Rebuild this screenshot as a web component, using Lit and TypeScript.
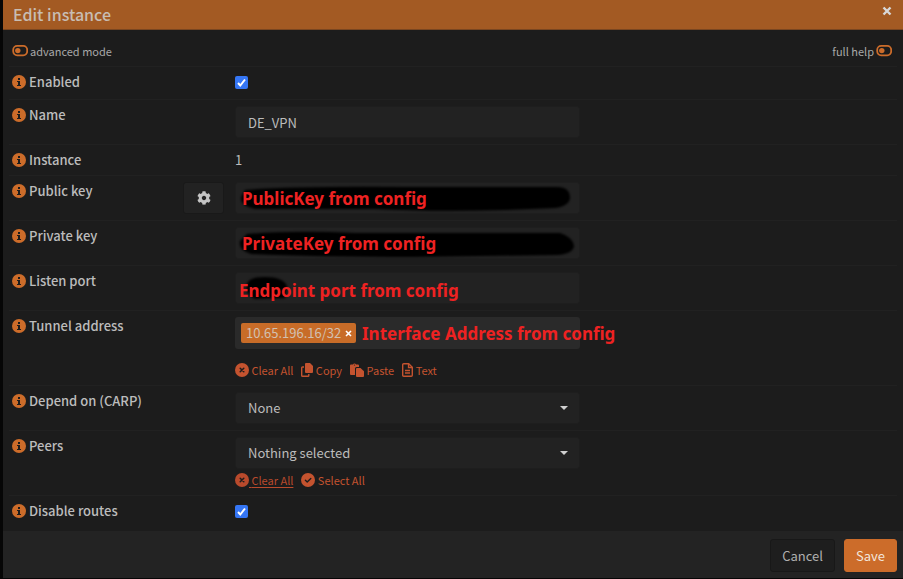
import { LitElement, html, css, svg, nothing, TemplateResult } from "lit";
import { customElement } from "lit/decorators.js";

const infoIcon = html`<svg class="dot" viewBox="0 0 14 14" aria-hidden="true">
  <circle cx="7" cy="7" r="7" fill="currentColor" />
  <path d="M6 3h2v2H6zM5 6h3v4h1v1H5v-1h1V7H5z" fill="#1c1c1c" />
</svg>`;

const crossDot = html`<svg class="dot" viewBox="0 0 14 14" aria-hidden="true">
  <circle cx="7" cy="7" r="7" fill="currentColor" />
  <path d="M5.2 5.2l3.6 3.6M8.8 5.2L5.2 8.8" stroke="#1c1c1c" stroke-width="1.5" stroke-linecap="round" />
</svg>`;

const checkDot = html`<svg class="dot" viewBox="0 0 14 14" aria-hidden="true">
  <circle cx="7" cy="7" r="7" fill="currentColor" />
  <path d="M4.4 7.2l1.8 1.8 3.6-3.6" fill="none" stroke="#1c1c1c" stroke-width="1.4" stroke-linecap="round" stroke-linejoin="round" />
</svg>`;

const copyIcon = html`<svg class="glyph" viewBox="0 0 12 14" aria-hidden="true">
  <path d="M5 0h4l3 3v6a1 1 0 0 1-1 1H5a1 1 0 0 1-1-1V1a1 1 0 0 1 1-1z" fill="currentColor" />
  <path d="M3 4H1.5a.8.8 0 0 0-.8.8v7.7c0 .5.3.8.8.8H7a.8.8 0 0 0 .8-.8V11" fill="none" stroke="currentColor" stroke-width="1.4" />
</svg>`;

const pasteIcon = html`<svg class="glyph wide" viewBox="0 0 14 14" aria-hidden="true">
  <path d="M1 1.5h2a1.6 1.6 0 0 1 3 0h2a1 1 0 0 1 1 1V4H6.5A1.5 1.5 0 0 0 5 5.5V12H1a1 1 0 0 1-1-1V2.5a1 1 0 0 1 1-1z" fill="currentColor" />
  <path d="M7 5h3.5L14 8.3V13a1 1 0 0 1-1 1H7a1 1 0 0 1-1-1V6a1 1 0 0 1 1-1z" fill="currentColor" />
  <circle cx="4.5" cy="2" r=".6" fill="#1c1c1c" />
</svg>`;

const textIcon = html`<svg class="glyph narrow" viewBox="0 0 11 14" aria-hidden="true">
  <path d="M1.7.7h5L10.3 4.3v8c0 .6-.4 1-1 1H1.7c-.6 0-1-.4-1-1V1.7c0-.6.4-1 1-1z" fill="none" stroke="currentColor" stroke-width="1.4" />
  <path d="M6.5.7v3.8h3.8M3 7.5h5M3 10h5" fill="none" stroke="currentColor" stroke-width="1.3" />
</svg>`;

const toggleIcon = html`<svg class="toggle" viewBox="0 0 16 12" aria-hidden="true">
  <rect x="1.2" y=".9" width="14" height="9.4" rx="4" fill="none" stroke="currentColor" stroke-width="1.8" />
  <circle cx="5.8" cy="5.6" r="2.7" fill="currentColor" />
</svg>`;

const gearIcon = html`<svg class="gear" viewBox="0 0 512 512" aria-hidden="true">
  <path fill="currentColor" d="M487.4 315.7l-42.6-24.6c4.3-23.2 4.3-47 0-70.2l42.6-24.6c4.9-2.8 7.1-8.6 5.5-14-11.1-35.6-30-67.8-54.7-94.6-3.8-4.1-10-5.1-14.8-2.3L380.8 110c-17.9-15.4-38.5-27.3-60.8-35.1V25.8c0-5.6-3.9-10.5-9.4-11.7-36.7-8.2-74.3-7.8-109.2 0-5.5 1.2-9.4 6.1-9.4 11.7V75c-22.2 7.9-42.8 19.8-60.8 35.1L88.7 85.5c-4.9-2.8-11-1.9-14.8 2.3-24.7 26.7-43.6 58.9-54.7 94.6-1.7 5.4.6 11.2 5.5 14L67.3 221c-4.3 23.2-4.3 47 0 70.2l-42.6 24.6c-4.9 2.8-7.1 8.6-5.5 14 11.1 35.6 30 67.8 54.7 94.6 3.8 4.1 10 5.1 14.8 2.3l42.6-24.6c17.9 15.4 38.5 27.3 60.8 35.1v49.2c0 5.6 3.9 10.5 9.4 11.7 36.7 8.2 74.3 7.8 109.2 0 5.5-1.2 9.4-6.1 9.4-11.7v-49.2c22.2-7.9 42.8-19.8 60.8-35.1l42.6 24.6c4.9 2.8 11 1.9 14.8-2.3 24.7-26.7 43.6-58.9 54.7-94.6 1.5-5.5-.7-11.3-5.6-14.1zM256 336c-44.1 0-80-35.9-80-80s35.9-80 80-80 80 35.9 80 80-35.9 80-80 80z" />
</svg>`;

const redactions: Record<string, TemplateResult> = {
  pub: svg`<path d="M10 8Q60 4 170 5L322 5Q335 5 335 16Q334 24 320 26L270 28Q200 30 140 27L20 27Q5 24 6 15Z" />`,
  priv: svg`<path d="M12 7Q60 3 120 6L325 6Q338 10 339 19Q338 27 322 28L180 30Q80 30 16 27Q3 23 5 14Z" />`,
  port: svg`<path d="M12 12Q14 5 30 5Q48 5 52 14L50 26L20 27Q10 22 12 12Z" />`,
};

@customElement("app-root")
export class AppRoot extends LitElement {
  static styles = css`
    :host {
      display: block;
      min-height: 100vh;
      box-sizing: border-box;
      padding: 0 0 2px 3px;
      background: #060606;
      color: #bcbcbc;
      font: 13px/16px "Noto Sans CJK SC", "Noto Sans", sans-serif;
    }
    * { box-sizing: border-box; }
    button, input, select { font: inherit; color: inherit; margin: 0; }
    button { padding: 0; border: 0; background: none; cursor: pointer; }
    svg { display: block; flex: none; }
    .dialog { background: #1c1c1c; }
    .header {
      display: flex;
      justify-content: space-between;
      height: 30px;
      padding: 0 10px;
      background: #a35a23;
      border-bottom: 1px solid #7a4620;
    }
    .title { margin: 0; font-size: 16px; line-height: 28px; font-weight: 500; color: #c8bdb3; }
    .close { width: 12px; height: 22px; color: #d8d8d8; }
    .close svg { width: 12px; height: 12px; }
    .toolbar {
      display: flex;
      justify-content: space-between;
      height: 36px;
      padding: 6px 11px 0 9px;
      font-size: 11px;
      color: #a9a9a9;
    }
    .switch { display: flex; align-items: center; gap: 2px; }
    .toggle { width: 16px; height: 12px; color: #cc6c2a; }
    .rows { padding: 0 6px 3px 6px; }
    .row {
      display: grid;
      grid-template-columns: 223fr 345fr 309fr;
      padding: 6px 8px 6px 3px;
      border-top: 1px solid #212121;
    }
    .name { display: flex; justify-content: space-between; align-items: flex-start; }
    .caption { display: flex; align-items: center; gap: 3px; padding-top: 1px; font-weight: 500; }
    .info { color: #cc6c2a; }
    .dot { width: 14px; height: 14px; }
    .generate {
      display: grid;
      place-items: center;
      width: 41px;
      height: 32px;
      margin-right: 11px;
      background: #222222;
      border: 1px solid #191919;
      border-radius: 3px;
      color: #c4c4c4;
    }
    .gear { width: 14px; height: 14px; }
    .field { position: relative; height: 32px; }
    .input, .select {
      display: block;
      width: 100%;
      height: 32px;
      padding: 0 12px;
      background: #222222;
      border: 1px solid #1e1e1e;
      border-radius: 3px;
      outline: none;
    }
    .select { appearance: none; }
    .caret {
      position: absolute;
      right: 12px;
      top: 14px;
      border: 4px solid transparent;
      border-top-color: #d0d0d0;
      border-bottom: 0;
      pointer-events: none;
    }
    .redaction { position: absolute; inset: 0; width: 345px; height: 32px; filter: blur(1px); pointer-events: none; }
    .note {
      position: absolute;
      top: 5px;
      left: 7px;
      font: 700 17px/24px "Noto Sans", sans-serif;
      color: #ee2222;
      white-space: nowrap;
      pointer-events: none;
    }
    .note.low { top: 7px; left: 4px; }
    .note.after { left: 127px; }
    .tokens { display: flex; align-items: center; padding: 0 6px; height: 32px; background: #2a2a2a; border-radius: 3px; }
    .token {
      display: flex;
      align-items: center;
      gap: 4px;
      height: 20px;
      padding: 0 4px 0 5px;
      background: #c86c28;
      border-radius: 2px;
      color: #d2c0b0;
    }
    .remove { color: #ffffff; }
    .remove svg { width: 7px; height: 7px; }
    .token-input { flex: 1; min-width: 0; border: 0; background: none; outline: none; }
    .links { display: flex; align-items: flex-start; gap: 8px; height: 17px; margin-top: 3px; font-size: 11px; }
    .links.spaced { margin-top: 13px; }
    .link { display: flex; align-items: center; color: #c4532f; text-decoration: none; }
    .link.active { text-decoration: underline; text-underline-offset: 2px; color: #b94a2c; }
    .glyph { width: 12px; height: 14px; }
    .glyph.wide { width: 14px; }
    .glyph.narrow { width: 11px; }
    .tick { position: relative; display: block; width: 13px; height: 13px; margin: 3px 0 4px; }
    .tick-input { appearance: none; display: block; width: 13px; height: 13px; border-radius: 2px; }
    .tick-input:checked { background: #3576f5; }
    .tick svg { position: absolute; inset: 0; width: 13px; height: 13px; pointer-events: none; }
    .static { display: block; padding-top: 1px; height: 18px; }
    .footer {
      display: flex;
      justify-content: flex-end;
      gap: 9px;
      padding: 8px 6px 6px;
      background: #232323;
    }
    .button { height: 33px; padding: 0 11px; border: 1px solid #181818; border-radius: 3px; background: #1e1e1e; color: #b0b0b0; }
    .button.primary { background: #cc6c2a; border-color: #cc6c2a; color: #f2e6dc; }
  `;

  private caption(id: string, text: string) {
    return html`<span class="caption">
      <button type="button" class="info" aria-label="Help: ${text}">${infoIcon}</button>
      <label for=${id}>${text}</label>
    </span>`;
  }

  private row(id: string, text: string, control: unknown, extra: unknown = nothing) {
    return html`<div class="row">
      <div class="name">${this.caption(id, text)}${extra}</div>
      <div>${control}</div>
    </div>`;
  }

  private tick(id: string) {
    return html`<span class="tick">
      <input class="tick-input" type="checkbox" id=${id} checked />
      <svg viewBox="0 0 13 13" aria-hidden="true">
        <path d="M3 7l2.3 2.5L10 3.5" fill="none" stroke="#fff" stroke-width="2" />
      </svg>
    </span>`;
  }

  private redacted(id: string, note: string, low = false) {
    return html`<div class="field">
      <input class="input" id=${id} type="text" autocomplete="off" />
      <svg class="redaction" viewBox="0 0 345 32" aria-hidden="true">${redactions[id]}</svg>
      <span class="note ${low ? "low" : ""}">${note}</span>
    </div>`;
  }

  private select(id: string, value: string) {
    return html`<div class="field">
      <select class="select" id=${id}><option>${value}</option></select>
      <span class="caret"></span>
    </div>`;
  }

  private link(icon: TemplateResult, text: string, active = false) {
    return html`<a class="link ${active ? "active" : ""}" href="#">${icon}<span>&nbsp;${text}</span></a>`;
  }

  render() {
    return html`<section class="dialog" role="dialog" aria-labelledby="title">
      <header class="header">
        <h1 class="title" id="title">Edit instance</h1>
        <button type="button" class="close" aria-label="Close">
          <svg viewBox="0 0 12 12"><path d="M2.5 2.5l7 7M9.5 2.5l-7 7" stroke="currentColor" stroke-width="2.4" /></svg>
        </button>
      </header>
      <form>
        <div class="toolbar">
          <button type="button" class="switch">${toggleIcon}<span>advanced mode</span></button>
          <button type="button" class="switch"><span>full help</span>${toggleIcon}</button>
        </div>
        <div class="rows">
          ${this.row("enabled", "Enabled", this.tick("enabled"))}
          ${this.row("name", "Name", html`<input class="input" id="name" type="text" value="DE_VPN" />`)}
          ${this.row("instance", "Instance", html`<output class="static" id="instance">1</output>`)}
          ${this.row(
            "pub",
            "Public key",
            this.redacted("pub", "PublicKey from config"),
            html`<button type="button" class="generate" aria-label="Generate new keypair">${gearIcon}</button>`,
          )}
          ${this.row("priv", "Private key", this.redacted("priv", "PrivateKey from config"))}
          ${this.row("port", "Listen port", this.redacted("port", "Endpoint port from config", true))}
          ${this.row(
            "tunnel",
            "Tunnel address",
            html`<div class="field">
                <div class="tokens">
                  <span class="token">10.65.196.16/32
                    <button type="button" class="remove" aria-label="Remove">
                      <svg viewBox="0 0 7 7"><path d="M1 1l5 5M6 1L1 6" stroke="currentColor" stroke-width="1.6" /></svg>
                    </button>
                  </span>
                  <input class="token-input" id="tunnel" type="text" />
                </div>
                <span class="note after">Interface Address from config</span>
              </div>
              <div class="links spaced">
                ${this.link(crossDot, "Clear All")}${this.link(copyIcon, "Copy")}
                ${this.link(pasteIcon, "Paste")}${this.link(textIcon, "Text")}
              </div>`,
          )}
          ${this.row("carp", "Depend on (CARP)", this.select("carp", "None"))}
          ${this.row(
            "peers",
            "Peers",
            html`${this.select("peers", "Nothing selected")}
              <div class="links">${this.link(crossDot, "Clear All", true)}${this.link(checkDot, "Select All")}</div>`,
          )}
          ${this.row("routes", "Disable routes", this.tick("routes"))}
        </div>
        <footer class="footer">
          <button type="button" class="button">Cancel</button>
          <button type="button" class="button primary">Save</button>
        </footer>
      </form>
    </section>`;
  }
}
